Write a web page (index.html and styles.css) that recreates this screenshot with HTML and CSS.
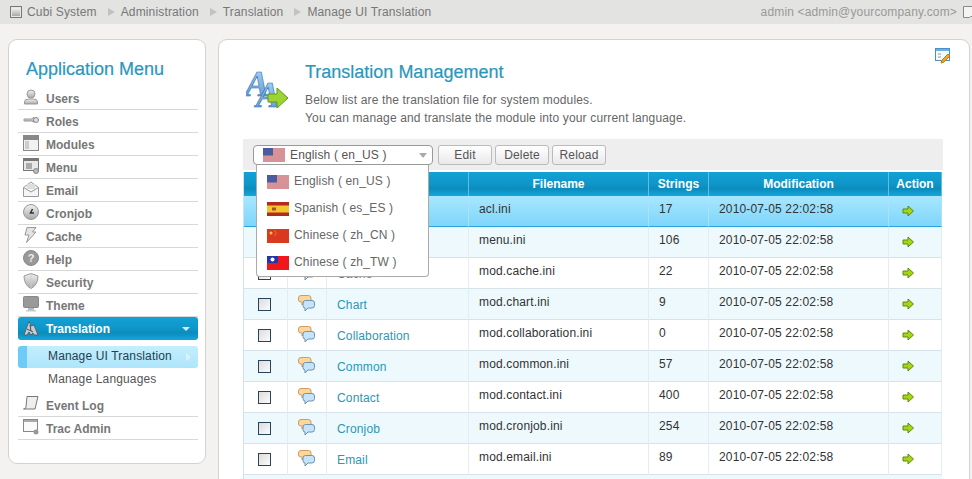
FILE: index.html
```html
<!DOCTYPE html>
<html lang="en">
<head>
<meta charset="utf-8">
<title>Manage UI Translation</title>
<link rel="stylesheet" href="styles.css">
</head>
<body>
<svg class="defs" width="0" height="0" aria-hidden="true">
  <defs>
    <linearGradient id="gGrey" x1="0" y1="0" x2="0" y2="1"><stop offset="0" stop-color="#f2f2f2"/><stop offset="1" stop-color="#a8a8a8"/></linearGradient>
    <linearGradient id="gBlueA" x1="0" y1="0" x2="0" y2="1"><stop offset="0" stop-color="#b6d8f6"/><stop offset="1" stop-color="#4f93d8"/></linearGradient>
    <symbol id="bubbles" viewBox="0 0 17 17">
      <path d="M3 .5h7.500q2.500 0 2.500 2.500v2q0 2-2.500 2H6l-2 3v-3H3Q.5 7 .5 5V3Q.5.500 3 .5z" fill="#fbd79a" stroke="#cf9b62"/>
      <path d="M7.500 5.500h6.500q2.500 0 2.500 2.500v2.500q0 2.500-2.500 2.500H10l-3 3v-3Q5 13 5 10.500V8q0-2.500 2.500-2.500z" fill="#c5e3fa" stroke="#6d93ae"/>
    </symbol>
    <symbol id="go" viewBox="0 0 12 12">
      <path d="M1 4h5V1l5.500 5L6 11V8H1z" fill="#a6d516" stroke="#5c8a0c"/>
    </symbol>
    <symbol id="us" viewBox="0 0 22 14">
      <rect width="22" height="14" fill="#f7f3f3"/>
      <path d="M0 1h22M0 3h22M0 5h22M0 7h22M0 9h22M0 11h22M0 13h22" stroke="#b8323f" stroke-width="1"/>
      <rect width="10" height="7.500" fill="#4a5c9e"/>
    </symbol>
    <symbol id="es" viewBox="0 0 22 14">
      <rect width="22" height="14" fill="#b52a1c"/>
      <rect y="3.500" width="22" height="7" fill="#f3c52f"/>
      <rect x="5" y="5.500" width="4" height="3" fill="#a5532a"/>
    </symbol>
    <symbol id="cn" viewBox="0 0 22 14">
      <rect width="22" height="14" fill="#d8391f"/>
      <circle cx="4" cy="4" r="1.500" fill="#f4c83a"/>
      <circle cx="8" cy="2" r=".6" fill="#f4c83a"/><circle cx="9" cy="4" r=".6" fill="#f4c83a"/><circle cx="8" cy="6" r=".6" fill="#f4c83a"/>
    </symbol>
    <symbol id="tw" viewBox="0 0 22 14">
      <rect width="22" height="14" fill="#f0161c"/>
      <rect width="11" height="7" fill="#2236a8"/>
      <circle cx="5.500" cy="3.500" r="2" fill="#fff"/>
    </symbol>
  </defs>
</svg>

<header class="topbar">
  <nav class="crumbs">
    <svg class="crumb-icon" width="12" height="12" viewBox="0 0 12 12"><rect x=".5" y=".5" width="11" height="11" fill="#e8e8e8" stroke="#777"/><rect x="2" y="2" width="8" height="8" fill="url(#gGrey)"/></svg>
    <span>Cubi System</span><i class="sep"></i>
    <span>Administration</span><i class="sep"></i>
    <span>Translation</span><i class="sep"></i>
    <span>Manage UI Translation</span>
  </nav>
  <div class="user">
    <span>admin &lt;admin@yourcompany.com&gt;</span>
    <svg width="12" height="14" viewBox="0 0 12 14"><path d="M.5 1.500h11v10h-4l-1 1h-6z" fill="#f4f4f4" stroke="#888"/></svg>
  </div>
</header>

<div class="page">
  <aside class="side">
    <section class="panel menu-panel">
      <h2 class="menu-title">Application Menu</h2>
      <ul class="menu">
        <li class="mi"><svg class="mi-icon" viewBox="0 0 16 16"><circle cx="8" cy="5" r="4" fill="url(#gGrey)" stroke="#999"/><path d="M1.500 15v-2q0-3 4-3h5q4 0 4 3v2z" fill="url(#gGrey)" stroke="#999"/></svg>Users</li>
        <li class="mi"><svg class="mi-icon" viewBox="0 0 16 16"><path d="M1 7h8l1-1.500h1V10h-1L9 9H1z" fill="url(#gGrey)" stroke="#999"/><circle cx="13" cy="8" r="2.500" fill="#ddd" stroke="#888"/></svg>Roles</li>
        <li class="mi"><svg class="mi-icon" viewBox="0 0 16 16"><rect x=".5" y=".5" width="15" height="15" fill="#f1f1f1" stroke="#888"/><rect x="1" y="1" width="14" height="4" fill="#888"/><rect x="2" y="6" width="4" height="8" fill="#ccc"/></svg>Modules</li>
        <li class="mi"><svg class="mi-icon" viewBox="0 0 16 16"><rect x=".5" y=".5" width="15" height="12" fill="#e8e8e8" stroke="#777"/><rect x="1" y="1" width="14" height="2" fill="#777"/><rect x="3" y="5" width="6" height="6" fill="#aaa"/><circle cx="13" cy="13" r="2.500" fill="#bbb" stroke="#888"/></svg>Menu</li>
        <li class="mi"><svg class="mi-icon" viewBox="0 0 16 16"><path d="M.5 6.500 8 1l7.500 5.500v9H.5z" fill="#f5f5f5" stroke="#999"/><path d="M.5 6.500 8 11l7.500-4.500" fill="none" stroke="#999"/><rect x="4" y="3" width="8" height="5" fill="#ddd"/></svg>Email</li>
        <li class="mi"><svg class="mi-icon" viewBox="0 0 16 16"><circle cx="8" cy="8" r="7.500" fill="url(#gGrey)" stroke="#999"/><path d="M9.500 5 7.500 9H11" fill="none" stroke="#333" stroke-width="1.500"/></svg>Cronjob</li>
        <li class="mi"><svg class="mi-icon" viewBox="0 0 16 16"><path d="M4 .5h9L9.500 5H13L3.500 15.500 6 8H2z" fill="#e4e4e4" stroke="#999"/></svg>Cache</li>
        <li class="mi"><svg class="mi-icon" viewBox="0 0 16 16"><circle cx="8" cy="8" r="7.500" fill="#999" stroke="#888"/><text x="8" y="12" class="qm">?</text></svg>Help</li>
        <li class="mi"><svg class="mi-icon" viewBox="0 0 16 16"><path d="M8 .5 15 3q0 9-7 12.500Q1 12 1 3z" fill="url(#gGrey)" stroke="#999"/><path d="M8 .5V15.500" stroke="#ccc"/></svg>Security</li>
        <li class="mi"><svg class="mi-icon" viewBox="0 0 16 16"><rect x=".5" y=".5" width="15" height="11" rx="1" fill="#999" stroke="#888"/><path d="M5 12h6v2H5z" fill="#bbb"/><rect x="3" y="14" width="10" height="1.500" fill="#ccc"/></svg>Theme</li>
        <li class="mi mi-active"><svg class="mi-icon" viewBox="0 0 16 16"><path d="M1 15 6 1l2 5 3-1 4 10h-4l-1-2-2 2-2-3-2 3z" fill="#c6cdd2" stroke="#54636e"/><path d="M4 9l6 3M7 5l1 6" stroke="#39505e"/></svg>Translation<i class="caret"></i></li>
      </ul>
      <ul class="submenu">
        <li class="si si-active">Manage UI Translation<i class="si-arrow"></i></li>
        <li class="si">Manage Languages</li>
      </ul>
      <ul class="menu">
        <li class="mi"><svg class="mi-icon" viewBox="0 0 16 16"><path d="M4 .5h11l-3 12.500H.5Q3 13 3 11z" fill="#eee" stroke="#777"/></svg>Event Log</li>
        <li class="mi"><svg class="mi-icon" viewBox="0 0 16 16"><rect x=".5" y=".5" width="14" height="12" fill="#fafafa" stroke="#888"/><rect x="1" y="1" width="13" height="2" fill="#aaa"/><circle cx="13" cy="13" r="2.500" fill="#999"/></svg>Trac Admin</li>
      </ul>
    </section>
    <section class="panel stub"></section>
  </aside>

  <main class="panel main">
    <svg class="edit-icon" width="16" height="16" viewBox="0 0 16 16"><rect x=".5" y=".5" width="14" height="12" fill="#f4f9fd" stroke="#4a90c6"/><rect x="1" y="1" width="13" height="2" fill="#6fb0dd"/><path d="M3 6h3M3 9h3" stroke="#999"/><path d="M6 15l1-3 6-6 2 2-6 6z" fill="#f4a623" stroke="#b97a1a"/></svg>
    <div class="intro">
      <svg class="intro-icon" width="44" height="46" viewBox="0 0 44 46">
        <text x="-1" y="31" class="big-a">A</text>
        <text x="10" y="42" class="big-a">A</text>
        <path d="M22 29h9v-6l11 10-11 10v-6h-9z" fill="#9ed334" stroke="#5f9a12"/>
      </svg>
      <div>
        <h1 class="title">Translation Management</h1>
        <p class="desc">Below list are the translation file for system modules.</p>
        <p class="desc">You can manage and translate the module into your current language.</p>
      </div>
    </div>

    <div class="tablewrap">
      <div class="toolbar">
        <div class="select">
          <svg class="flag" width="22" height="14"><use href="#us"/></svg>
          <span class="select-label">English ( en_US )</span>
          <i class="select-caret"></i>
        </div>
        <button class="btn btn-edit" type="button">Edit</button>
        <button class="btn" type="button">Delete</button>
        <button class="btn" type="button">Reload</button>
      </div>
      <ul class="dropdown">
        <li class="dd"><svg class="flag" width="22" height="14"><use href="#us"/></svg>English ( en_US )</li>
        <li class="dd"><svg class="flag" width="22" height="14"><use href="#es"/></svg>Spanish ( es_ES )</li>
        <li class="dd"><svg class="flag" width="22" height="14"><use href="#cn"/></svg>Chinese ( zh_CN )</li>
        <li class="dd"><svg class="flag" width="22" height="14"><use href="#tw"/></svg>Chinese ( zh_TW )</li>
      </ul>
      <table class="grid">
        <colgroup><col class="c1"><col class="c2"><col class="c3"><col class="c4"><col class="c5"><col class="c6"><col class="c7"></colgroup>
        <thead>
          <tr><th></th><th></th><th></th><th>Filename</th><th>Strings</th><th>Modification</th><th>Action</th></tr>
        </thead>
        <tbody>
          <tr class="sel"><td class="cc"></td><td class="cb"></td><td></td><td>acl.ini</td><td>17</td><td>2010-07-05 22:02:58</td><td class="cc-go"><svg width="12" height="12"><use href="#go"/></svg></td></tr>
          <tr class="alt"><td class="cc"></td><td class="cb"></td><td></td><td>menu.ini</td><td>106</td><td>2010-07-05 22:02:58</td><td class="cc-go"><svg width="12" height="12"><use href="#go"/></svg></td></tr>
          <tr><td class="cc"><i class="check"></i></td><td class="cb"><svg width="17" height="17"><use href="#bubbles"/></svg></td><td><a class="name">Cache</a></td><td>mod.cache.ini</td><td>22</td><td>2010-07-05 22:02:58</td><td class="cc-go"><svg width="12" height="12"><use href="#go"/></svg></td></tr>
          <tr class="alt"><td class="cc"><i class="check"></i></td><td class="cb"><svg width="17" height="17"><use href="#bubbles"/></svg></td><td><a class="name">Chart</a></td><td>mod.chart.ini</td><td>9</td><td>2010-07-05 22:02:58</td><td class="cc-go"><svg width="12" height="12"><use href="#go"/></svg></td></tr>
          <tr><td class="cc"><i class="check"></i></td><td class="cb"><svg width="17" height="17"><use href="#bubbles"/></svg></td><td><a class="name">Collaboration</a></td><td>mod.collaboration.ini</td><td>0</td><td>2010-07-05 22:02:58</td><td class="cc-go"><svg width="12" height="12"><use href="#go"/></svg></td></tr>
          <tr class="alt"><td class="cc"><i class="check"></i></td><td class="cb"><svg width="17" height="17"><use href="#bubbles"/></svg></td><td><a class="name">Common</a></td><td>mod.common.ini</td><td>57</td><td>2010-07-05 22:02:58</td><td class="cc-go"><svg width="12" height="12"><use href="#go"/></svg></td></tr>
          <tr><td class="cc"><i class="check"></i></td><td class="cb"><svg width="17" height="17"><use href="#bubbles"/></svg></td><td><a class="name">Contact</a></td><td>mod.contact.ini</td><td>400</td><td>2010-07-05 22:02:58</td><td class="cc-go"><svg width="12" height="12"><use href="#go"/></svg></td></tr>
          <tr class="alt"><td class="cc"><i class="check"></i></td><td class="cb"><svg width="17" height="17"><use href="#bubbles"/></svg></td><td><a class="name">Cronjob</a></td><td>mod.cronjob.ini</td><td>254</td><td>2010-07-05 22:02:58</td><td class="cc-go"><svg width="12" height="12"><use href="#go"/></svg></td></tr>
          <tr><td class="cc"><i class="check"></i></td><td class="cb"><svg width="17" height="17"><use href="#bubbles"/></svg></td><td><a class="name">Email</a></td><td>mod.email.ini</td><td>89</td><td>2010-07-05 22:02:58</td><td class="cc-go"><svg width="12" height="12"><use href="#go"/></svg></td></tr>
        </tbody>
      </table>
      <div class="grid-tail"></div>
    </div>
  </main>
</div>
</body>
</html>
```

FILE: styles.css
```css
* { box-sizing: border-box; }
html, body { margin: 0; padding: 0; height: 479px; overflow: hidden; }
body { background: #f3f2f0; font: 12px/15px "Liberation Sans", Arial, sans-serif; color: #333; letter-spacing: .15px; }
ul { list-style: none; margin: 0; padding: 0; }
h1, h2, p { margin: 0; font-weight: normal; }
.defs { position: absolute; }

.topbar { height: 24px; background: #e3e3e1; display: flex; justify-content: space-between; align-items: center; color: #777; padding-left: 10px; }
.crumbs { display: flex; align-items: center; }
.crumb-icon { margin-right: 5px; }
.sep { width: 0; height: 0; border-left: 7px solid #c2c2c2; border-top: 4px solid transparent; border-bottom: 4px solid transparent; margin: 0 6px 0 11px; }
.user { display: flex; align-items: center; gap: 6px; margin-right: -3px; color: #999; }

.page { height: 455px; overflow: hidden; display: flex; align-items: flex-start; gap: 12px; padding: 15px 0 0 8px; }
.side { width: 198px; flex: none; display: flex; flex-direction: column; gap: 15px; }
.panel { background: #fff; border: 1px solid #d2d2d2; border-radius: 9px; }
.menu-panel { height: 425px; padding: 19px 7px 0 9px; flex: none; }
.stub { height: 40px; flex: none; }
.menu-title { font-size: 18px; line-height: 20px; color: #2a97bd; padding-left: 8px; margin-bottom: 8px; -webkit-text-stroke: .2px #2a97bd; letter-spacing: 0; }
.mi { height: 23px; display: flex; align-items: center; padding: 2px 0 0 5px; border-bottom: 1px solid #d8d8d8; font-weight: bold; color: #777; position: relative; letter-spacing: 0; }
.mi-icon { width: 16px; height: 16px; margin-right: 7px; flex: none; position: relative; top: -2px; }
.qm { font: bold 11px "Liberation Sans", sans-serif; fill: #eee; text-anchor: middle; }
.mi-active { border: 0; color: #fff; border-radius: 3px; background: linear-gradient(#12a1d6, #0f96c9 50%, #0b8cbd 70%, #14a6dc); }
.caret { position: absolute; right: 8px; top: 10px; border-top: 4px solid #d6eef8; border-left: 4px solid transparent; border-right: 4px solid transparent; }
.submenu { padding: 6px 0 4px; }
.si { height: 22px; line-height: 22px; padding-left: 30px; color: #555; position: relative; }
.si-active { color: #24404f; line-height: 21px; border-radius: 3px; border-left: 9px solid #6ccbf7; padding-left: 21px; background: linear-gradient(#c3eefd, #aee5fb); }
.si-arrow { position: absolute; right: 7px; top: 7px; border-left: 5px solid #d9f3fd; border-top: 4px solid transparent; border-bottom: 4px solid transparent; }

.main { flex: none; width: 752px; height: 480px; padding: 0 26px 0 24px; position: relative; }
.edit-icon { position: absolute; right: 18px; top: 8px; }
.intro { display: flex; padding-top: 21px; height: 99px; }
.intro-icon { margin: 4px 15px 0 3px; flex: none; }
.big-a { font: italic bold 36px "Liberation Serif", serif; fill: url(#gBlueA); stroke: #2e6ea8; stroke-width: .6px; }
.title { font-size: 18px; line-height: 22px; color: #2a97bd; margin-bottom: 8px; -webkit-text-stroke: .2px #2a97bd; letter-spacing: 0; }
.desc { color: #666; line-height: 18px; }

.tablewrap { position: relative; }
.toolbar { height: 31px; background: #eee; display: flex; align-items: center; padding: 1px 0 0 10px; gap: 3px; margin-bottom: 2px; }
.select { width: 180px; height: 20px; border: 1px solid #999; border-radius: 4px; background: #fff; display: flex; align-items: center; padding-left: 9px; color: #555; margin-right: 2px; }
.flag { flex: none; margin-right: 5px; }
.select-caret { margin-left: auto; margin-right: 5px; border-top: 5px solid #aaa; border-left: 4px solid transparent; border-right: 4px solid transparent; }
.btn { width: 54px; height: 20px; padding: 0; border: 1px solid #bbb; border-radius: 3px; background: linear-gradient(#fff, #e9e9e9); font: 12px "Liberation Sans", Arial, sans-serif; letter-spacing: .15px; color: #555; }
.dropdown { position: absolute; z-index: 5; left: 13px; top: 26px; width: 173px; height: 112px; background: #fff; border: 1px solid #aaa; border-top: 0; border-radius: 0 0 4px 4px; padding-top: 3px; color: #666; }
.dd { height: 27px; display: flex; align-items: center; padding-left: 10px; }

.grid { width: 699px; table-layout: fixed; border-collapse: separate; border-spacing: 0; border-left: 1px solid #cfe3ec; }
.c1 { width: 44px; } .c2 { width: 39px; } .c3 { width: 142px; } .c4 { width: 180px; } .c5 { width: 60px; } .c6 { width: 180px; } .c7 { width: 53px; }
.grid th { height: 24px; padding: 1px 0 0; color: #fff; font-weight: bold; text-align: center; letter-spacing: 0; border-right: 1px solid #5dbfe3; background: linear-gradient(#12a1d6, #0f96c9 50%, #0b8cbd 70%, #14a6dc); }
.grid td { height: 31px; padding: 0 0 4px 10px; color: #333; background: #fff; border-right: 1px solid #e4eef2; border-bottom: 1px solid #d6e4ea; }
.grid tr.alt td { background: #eef9fd; }
.grid tr.sel td { background: linear-gradient(#a8e7ff, #7ed5fa); border-bottom: 1px solid #2aa3da; border-right-color: #a9e2fa; }
.grid td.cc { padding: 0 2px 0 0; text-align: center; }
.grid td.cb { padding: 0 1px 2px 0; text-align: center; }
.grid td.cc-go { padding: 0 0 0 13px; }
.grid td svg { vertical-align: middle; }
.name { color: #2a97b5; }
.grid tr td:nth-child(3) { padding-top: 2px; padding-bottom: 0; }
.grid-tail { width: 699px; height: 31px; background: #eef9fd; border-left: 1px solid #cfe3ec; }
.check { display: inline-block; width: 13px; height: 13px; border: 1px solid #25455c; background: linear-gradient(135deg, #dcdcdc, #fbfbfb); vertical-align: middle; }
```
